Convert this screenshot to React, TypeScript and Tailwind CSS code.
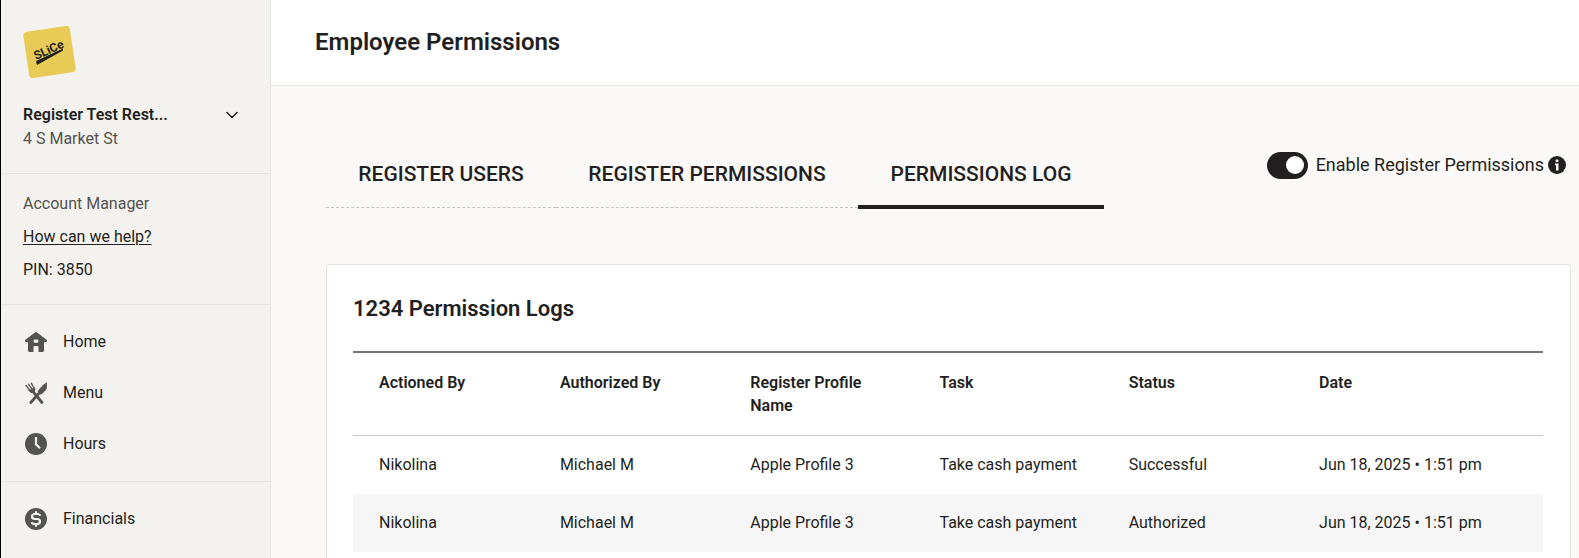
import { ChevronDown } from "lucide-react";

const tabs = [
  { label: "REGISTER USERS", width: "w-[230px]" },
  { label: "REGISTER PERMISSIONS", width: "w-[302px]" },
  { label: "PERMISSIONS LOG", width: "w-[246px]", active: true },
];

const columns = [
  { label: "Actioned By", width: "w-[15.2%]" },
  { label: "Authorized By", width: "w-[16%]" },
  { label: "Register Profile Name", width: "w-[15.9%]" },
  { label: "Task", width: "w-[15.9%]" },
  { label: "Status", width: "w-[16%]" },
  { label: "Date", width: "w-[21%]" },
];

const logs = [
  ["Nikolina", "Michael M", "Apple Profile 3", "Take cash payment", "Successful", "Jun 18, 2025 • 1:51 pm"],
  ["Nikolina", "Michael M", "Apple Profile 3", "Take cash payment", "Authorized", "Jun 18, 2025 • 1:51 pm"],
];

function Logo() {
  return (
    <svg viewBox="0 0 54 54" className="size-[54px]" role="img" aria-label="Slice">
      <rect x="3" y="3.500" width="47" height="47" rx="4" fill="#e8cb57" transform="rotate(-8.5 26.5 27)" />
      <text
        x="13"
        y="35"
        transform="rotate(-24 13 35)"
        fill="#231f20"
        fontFamily="'Liberation Sans Narrow', 'Roboto', sans-serif"
        fontSize="12"
        fontWeight="700"
      >
        SLiCe
      </text>
      <path d="M13 36 40 23.500V25.500L14 40Z" fill="#231f20" />
    </svg>
  );
}

function HomeIcon() {
  return (
    <svg viewBox="0 0 24 24" className="size-6" fill="#535350" aria-hidden="true">
      <path
        fillRule="evenodd"
        d="M11 2.500a1.600 1.600 0 0 1 2 0l9.600 7.200c.8.7.4 2.300-.6 2.300H20v8.500a1.500 1.500 0 0 1-1.500 1.500H14.500v-5a1 1 0 0 0-1-1h-3a1 1 0 0 0-1 1v5H5.500A1.500 1.500 0 0 1 4 20.500V12H2c-1 0-1.400-1.600-.6-2.300ZM10.500 9.500a.8.8 0 0 0-.8.8v1.700c0 .5.3.8.8.8h3c.5 0 .8-.3.8-.8v-1.700a.8.8 0 0 0-.8-.8Z"
      />
    </svg>
  );
}

function MenuIcon() {
  return (
    <svg viewBox="0 0 24 24" className="size-6" fill="none" stroke="#535350" strokeLinecap="round" aria-hidden="true">
      <path d="M2 4.500 6 9.500M4.500 3.200 8 8M7.200 2.200 10 7" strokeWidth="1.300" />
      <path d="M5 9.500c1 2 3 2.500 4.500 1.500s1.800-2.500.8-4.500L8.500 8 6.500 9Z" fill="#535350" strokeWidth="1" />
      <path d="m8.500 10 9.500 11.500" strokeWidth="2.800" />
      <path
        d="M22.300 2.200v5.300c-1.500 2.500-3.300 4.500-5.600 5.700l-2.500-2.800c2-3 4.300-6.200 8.100-8.200Z"
        fill="#535350"
        strokeWidth="1"
        strokeLinejoin="round"
      />
      <path d="m14.800 12.500-8 9" strokeWidth="2.800" />
    </svg>
  );
}

function ClockIcon() {
  return (
    <svg viewBox="0 0 24 24" className="size-6" aria-hidden="true">
      <circle cx="12" cy="12" r="11" fill="#535350" />
      <path d="M12 5v7.200l4 4" fill="none" stroke="#f4f2ef" strokeWidth="2.200" />
    </svg>
  );
}

function DollarIcon() {
  return (
    <svg viewBox="0 0 24 24" className="size-6" aria-hidden="true">
      <circle cx="12" cy="12" r="11" fill="#535350" />
      <path
        d="M16.200 8.800c-.3-1.400-1.600-1.800-3-1.800h-2.400c-1.600 0-2.800 1-2.800 2.500S9.200 12 10.800 12h2.400c1.600 0 2.800 1 2.800 2.500S14.800 17 13.200 17h-2.400c-1.400 0-2.700-.5-3-1.800M12 4.200V7m0 10v2.800"
        fill="none"
        stroke="#f4f2ef"
        strokeWidth="2.200"
      />
    </svg>
  );
}

function InfoIcon() {
  return (
    <svg viewBox="0 0 18 18" className="size-[18px]" aria-hidden="true">
      <circle cx="9" cy="9" r="9" fill="#231f20" />
      <circle cx="9" cy="4.800" r="1.500" fill="#faf9f7" />
      <path d="M7 7.500h3.500v7H8V9.200H7Z" fill="#faf9f7" />
    </svg>
  );
}

function NavItem({ icon, label }: { icon: React.ReactNode; label: string }) {
  return (
    <a href="#" className="flex h-[51px] items-center gap-[15px] pl-[23px]">
      {icon}
      {label}
    </a>
  );
}

function Sidebar() {
  return (
    <aside className="w-[271px] shrink-0 border-r border-l border-r-[#e6e4e1] border-l-black bg-[#f4f2ef]">
      <div className="border-b border-[#e6e4e1] px-[22px] pt-[25px] pb-[22px]">
        <Logo />
        <button type="button" className="mt-6 flex w-full items-center justify-between pr-1.5 font-semibold">
          Register Test Rest...
          <ChevronDown className="size-5" strokeWidth={1.75} />
        </button>
        <p className="text-[#535350]">4 S Market St</p>
      </div>

      {/* Account manager */}
      <div className="flex flex-col items-start gap-[9px] border-b border-[#e6e4e1] px-[22px] pt-[18px] pb-[22px]">
        <p className="text-[#535350]">Account Manager</p>
        <a href="#" className="underline underline-offset-2">
          How can we help?
        </a>
        <p>PIN: 3850</p>
      </div>

      <nav>
        <div className="border-b border-[#e6e4e1] pt-[11px] pb-3">
          <NavItem icon={<HomeIcon />} label="Home" />
          <NavItem icon={<MenuIcon />} label="Menu" />
          <NavItem icon={<ClockIcon />} label="Hours" />
        </div>
        <div className="pt-[11px] pb-3">
          <NavItem icon={<DollarIcon />} label="Financials" />
        </div>
      </nav>
    </aside>
  );
}

function LogsTable() {
  return (
    <table className="w-full table-fixed border-collapse text-left">
      <thead>
        <tr className="border-t-2 border-b border-t-[#757575] border-b-[#c4c4c4]">
          {columns.map((col) => (
            <th key={col.label} className={`${col.width} py-[18px] pr-6 pl-[26px] align-top leading-[23px] font-semibold`}>
              {col.label}
            </th>
          ))}
        </tr>
      </thead>
      <tbody>
        {logs.map((row, i) => (
          <tr key={i} className="h-[58px] even:bg-[#f6f6f6]">
            {row.map((cell, j) => (
              <td key={j} className="pl-[26px] whitespace-nowrap">
                {cell}
              </td>
            ))}
          </tr>
        ))}
      </tbody>
    </table>
  );
}

function App() {
  return (
    <div className="flex min-h-screen bg-[#faf9f7] font-['Roboto','Liberation_Sans',sans-serif] text-base text-[#231f20]">
      <Sidebar />
      <main className="flex min-w-0 flex-1 flex-col">
        <header className="flex h-[86px] items-center border-b border-[#e6e4e1] bg-white px-11 pb-0.5">
          <h1 className="text-2xl font-semibold">Employee Permissions</h1>
        </header>

        <div className="flex items-start justify-between pt-[53px] pr-[13px] pl-[55px]">
          <div role="tablist" className="flex h-[70px]">
            {tabs.map((tab) => (
              <button
                key={tab.label}
                type="button"
                role="tab"
                aria-selected={!!tab.active}
                className={`${tab.width} flex flex-col text-[21px] leading-7 font-medium whitespace-nowrap ${
                  tab.active ? "h-[70px] border-b-4 border-[#231f20]" : "h-[69px] border-b border-dashed border-[#c4c4c4]"
                } items-center pt-[21px]`}
              >
                {tab.label}
              </button>
            ))}
          </div>

          {/* Permissions switch */}
          <div className="flex items-center pt-3">
            <input
              id="enable-permissions"
              type="checkbox"
              role="switch"
              defaultChecked
              className="mr-2 flex h-[27px] w-[41px] appearance-none items-center rounded-full bg-[#231f20] px-1 before:size-[18px] before:rounded-full before:bg-white checked:justify-end"
            />
            <label htmlFor="enable-permissions" className="text-lg whitespace-nowrap">
              Enable Register Permissions
            </label>
            <button type="button" aria-label="More information" className="ml-1">
              <InfoIcon />
            </button>
          </div>
        </div>

        <section className="mt-[55px] mr-2 ml-[55px] flex-1 rounded-t border border-b-0 border-[#e6e4e1] bg-white pt-7 pr-[27px] pl-[26px]">
          <h2 className="mb-[27px] text-[22px] leading-[31px] font-semibold">1234 Permission Logs</h2>
          <LogsTable />
        </section>
      </main>
    </div>
  );
}

export default App;
